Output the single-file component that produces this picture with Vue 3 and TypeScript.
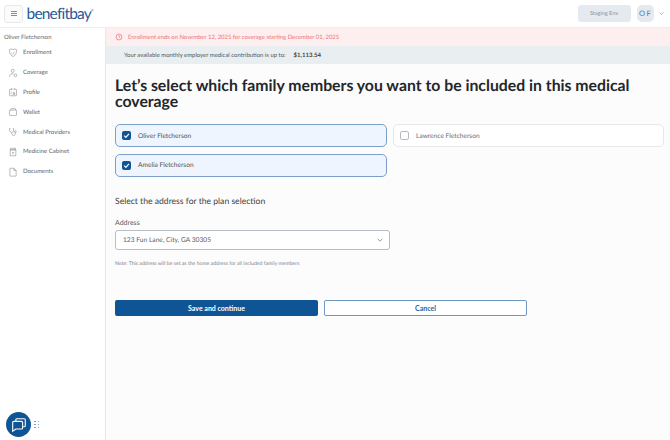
<template>
  <div class="page">
    <header class="topbar">
      <button class="menu-btn" aria-label="Menu">
        <span></span><span></span><span></span>
      </button>
      <div class="logo">benefitbay<sup>®</sup></div>
      <div class="spacer"></div>
      <div class="env">Staging Env</div>
      <div class="avatar">OF</div>
      <svg class="caret" viewBox="0 0 10 10"><path d="M2 3.500l3 3 3-3" /></svg>
    </header>

    <div class="body">
      <aside class="sidebar">
        <div class="user">Oliver Fletcherson</div>
        <nav class="nav">
          <a v-for="item in navItems" :key="item.label" class="nav-item">
            <svg class="nav-icon" viewBox="0 0 16 16">
              <path v-for="d in item.paths" :key="d" :d="d" />
            </svg>
            <span>{{ item.label }}</span>
          </a>
        </nav>
        <div class="chat-row">
          <div class="chat">
            <svg viewBox="0 0 20 20">
              <path d="M6.500 5.500V4.200c0-.7.500-1.200 1.200-1.200h8.100c.7 0 1.200.5 1.200 1.200v6.600c0 .7-.5 1.200-1.200 1.200h-1.300" />
              <path d="M4.200 6h8.600c.7 0 1.200.5 1.200 1.200v6.100c0 .7-.5 1.200-1.200 1.200H6.500L3 17V7.200C3 6.500 3.500 6 4.200 6z" />
            </svg>
          </div>
          <div class="grip"><i v-for="n in 6" :key="n"></i></div>
        </div>
      </aside>

      <main class="main">
        <div class="alert">
          <svg class="alert-icon" viewBox="0 0 12 12">
            <circle cx="6" cy="6" r="4.400" />
            <path d="M6 3.400V6l1.800 1" />
          </svg>
          <span>Enrollment ends on November 12, 2025 for coverage starting December 01, 2025</span>
        </div>
        <div class="contribution">
          <span>Your available monthly employer medical contribution is up to:</span>
          <strong>$1,113.54</strong>
        </div>

        <section class="content">
          <h1>Let’s select which family members you want to be included in this medical coverage</h1>

          <div class="members">
            <label v-for="m in members" :key="m.name" class="member" :class="{ checked: m.checked }">
              <span class="box">
                <svg v-if="m.checked" viewBox="0 0 10 10"><path d="M2.400 5.200l1.900 1.900 3.400-4" /></svg>
              </span>
              <span>{{ m.name }}</span>
            </label>
          </div>

          <h2>Select the address for the plan selection</h2>

          <div class="field-label">Address</div>
          <div class="select">
            <span>123 Fun Lane, City, GA 30305</span>
            <svg viewBox="0 0 10 10"><path d="M2 3.500l3 3 3-3" /></svg>
          </div>
          <p class="note">Note: This address will be set as the home address for all included family members</p>

          <div class="actions">
            <button class="btn primary">Save and continue</button>
            <button class="btn outline">Cancel</button>
          </div>
        </section>
      </main>
    </div>
  </div>
</template>

<script setup lang="ts">
interface NavItem {
  label: string
  paths: string[]
}

const navItems: NavItem[] = [
  {
    label: 'Enrollment',
    paths: [
      'M8 2.500c2-1 4-1 5.500-.2.600 5-1 9-5.500 11.500C3.500 11.300 1.900 7.300 2.500 2.300 4 1.500 6 1.500 8 2.500z',
      'M5.500 7.800l1.800 1.700 3.200-3'
    ]
  },
  {
    label: 'Coverage',
    paths: [
      'M7.500 2a2.500 2.500 0 1 1 0 5 2.500 2.500 0 0 1 0-5z',
      'M2.500 14c0-3 2-5 4.500-5 .8 0 1.500.2 2 .5',
      'M12 9.500a2.200 2.200 0 1 1 0 4.400 2.200 2.200 0 0 1 0-4.400z'
    ]
  },
  {
    label: 'Profile',
    paths: [
      'M5.500 3.500H3.300c-.5 0-.8.300-.8.800v8.900c0 .5.300.8.800.8h9.400c.5 0 .8-.3.800-.8V4.300c0-.5-.3-.8-.8-.8h-2.200',
      'M5.500 2v3M10.500 2v3M7 3.500h2',
      'M9.500 8.500a1.300 1.300 0 1 1 0 2.600 1.300 1.300 0 0 1 0-2.600zM7.500 13c0-1 1-1.800 2-1.800s2 .8 2 1.800M4.500 8h1.500M4.500 10.500h1.500'
    ]
  },
  {
    label: 'Wallet',
    paths: [
      'M3.200 5h9.600c.5 0 .9.400.9.900v6.700c0 .5-.4.900-.9.900H3.200c-.5 0-.9-.4-.9-.9V5.900c0-.5.4-.9.900-.9z',
      'M4 5l1-2.500h6.500L12.500 5'
    ]
  },
  {
    label: 'Medical Providers',
    paths: [
      'M3.800 2.200H2.500C2.200 5.500 3 8.800 5.800 8.800S9.400 5.500 9 2.200H7.700',
      'M5.800 8.800c0 3 1.300 4.800 3.200 4.800 1.800 0 2.700-1.400 2.700-3.200V9',
      'M11.700 6a1.500 1.500 0 1 1 0 3 1.500 1.500 0 0 1 0-3z'
    ]
  },
  {
    label: 'Medicine Cabinet',
    paths: [
      'M4 2h8v2.500H4z',
      'M3.500 4.500h9v9.500h-9z',
      'M8 7.800v3M6.500 9.300h3'
    ]
  },
  {
    label: 'Documents',
    paths: [
      'M3.500 2h6l3.500 3.500v8.600c0 .3-.2.500-.5.500h-9c-.3 0-.5-.2-.5-.5V2.500c0-.3.200-.5.500-.5z',
      'M9.500 2v3.500H13'
    ]
  }
]

const members = [
  { name: 'Oliver Fletcherson', checked: true },
  { name: 'Lawrence Fletcherson', checked: false },
  { name: 'Amelia Fletcherson', checked: true }
]
</script>

<style>
html,
body {
  margin: 0;
  background: #fff;
}
</style>

<style scoped>
.page {
  width: 670px;
  height: 440px;
  display: flex;
  flex-direction: column;
  overflow: hidden;
  font-family: Lato, "Open Sans", sans-serif;
  color: #3c4248;
  text-rendering: geometricPrecision;
}

.topbar {
  height: 28px;
  flex-shrink: 0;
  display: flex;
  align-items: center;
  padding: 0 5px 0 4px;
  box-sizing: border-box;
  border-bottom: 1px solid #eceef0;
  background: #fff;
}

.menu-btn {
  width: 19px;
  height: 18px;
  padding: 0;
  display: flex;
  flex-direction: column;
  align-items: center;
  justify-content: center;
  gap: 1px;
  background: #fbfbfb;
  border: 1px solid #e8e9eb;
  border-radius: 3px;
}

.menu-btn span {
  width: 6px;
  height: 1px;
  background: #8a8d91;
}

.logo {
  margin-left: 3.500px;
  font-size: 15.500px;
  line-height: 20px;
  color: #1f5a99;
  letter-spacing: -0.800px;
}

.logo sup {
  font-size: 3px;
  vertical-align: 8px;
  line-height: 0;
  letter-spacing: 0;
}

.spacer {
  flex: 1;
}

.env {
  width: 53px;
  height: 17px;
  display: flex;
  align-items: center;
  justify-content: center;
  font-size: 5.500px;
  color: #8a9097;
  background: #e5eaf1;
  border-radius: 3px;
}

.avatar {
  width: 17px;
  height: 17px;
  margin-left: 6.500px;
  display: flex;
  align-items: center;
  justify-content: center;
  font-size: 7.500px;
  letter-spacing: 1.500px;
  color: #4f75a8;
  background: #e5eaf1;
  border-radius: 5px;
}

.caret {
  width: 7px;
  height: 7px;
  margin-left: 4px;
  fill: none;
  stroke: #9aa0a6;
  stroke-width: 1;
}

.body {
  flex: 1;
  display: flex;
  min-height: 0;
}

.sidebar {
  width: 106px;
  flex-shrink: 0;
  box-sizing: border-box;
  display: flex;
  flex-direction: column;
  padding: 6px 0 0 4px;
  background: #fff;
  border-right: 1px solid #e6e7e9;
}

.user {
  font-size: 5.900px;
  line-height: 8px;
  color: #5f656b;
}

.nav {
  display: flex;
  flex-direction: column;
  gap: 8px;
  margin-top: 5px;
}

.nav-item {
  height: 11.800px;
  display: flex;
  align-items: center;
  gap: 5px;
  padding-left: 4px;
  font-size: 6px;
  color: #5f656b;
}

.nav-icon {
  width: 10px;
  height: 10px;
  fill: none;
  stroke: #83888d;
  stroke-width: 0.900;
}

.chat-row {
  margin-top: auto;
  display: flex;
  align-items: center;
  gap: 3px;
  padding: 0 0 3px 2px;
}

.chat {
  width: 25px;
  height: 25px;
  display: flex;
  align-items: center;
  justify-content: center;
  background: #0f5596;
  border-radius: 50%;
}

.chat svg {
  width: 18px;
  height: 18px;
  fill: #0f5596;
  stroke: #fff;
  stroke-width: 1.200;
}

.grip {
  display: grid;
  grid-template-columns: 1.500px 1.500px;
  column-gap: 2px;
  row-gap: 1.500px;
}

.grip i {
  width: 1.500px;
  height: 1.500px;
  background: #7f9fc4;
}

.main {
  flex: 1;
  min-width: 0;
  background: #fcfcfc;
}

.alert {
  height: 18px;
  display: flex;
  align-items: center;
  gap: 5px;
  padding-left: 9px;
  font-size: 5.900px;
  color: #ec7379;
  background: #fdefef;
}

.alert-icon {
  width: 8px;
  height: 8px;
  fill: none;
  stroke: #e9686f;
  stroke-width: 1;
}

.contribution {
  height: 18px;
  display: flex;
  align-items: center;
  gap: 8px;
  padding-left: 18px;
  font-size: 5.950px;
  color: #51575d;
  background: #e9eef1;
}

.contribution strong {
  font-size: 6.050px;
  font-weight: 700;
  color: #3a4046;
}

.content {
  padding: 14px 6px 0 9px;
}

h1 {
  margin: 0;
  font-size: 15.800px;
  line-height: 16px;
  font-weight: 700;
  color: #23272b;
}

.members {
  display: grid;
  grid-template-columns: 272px 271px;
  gap: 6.500px 6px;
  margin-top: 14px;
}

.member {
  height: 23px;
  box-sizing: border-box;
  display: flex;
  align-items: center;
  gap: 7px;
  padding-left: 6px;
  font-size: 6.620px;
  color: #656b71;
  background: #fff;
  border: 1px solid #e6e7ea;
  border-radius: 5px;
}

.member.checked {
  color: #4c5258;
  background: #eef5fe;
  border-color: #7b9fc9;
}

.box {
  width: 9px;
  height: 9px;
  flex-shrink: 0;
  box-sizing: border-box;
  display: flex;
  border: 1px solid #b5bbc2;
  border-radius: 2px;
  background: #fff;
}

.member.checked .box {
  border: 0;
  background: #0f5596;
}

.box svg {
  width: 100%;
  height: 100%;
  fill: none;
  stroke: #fff;
  stroke-width: 1.300;
}

h2 {
  margin: 18.500px 0 0;
  font-size: 8.600px;
  line-height: 12px;
  font-weight: 400;
  color: #3a3f45;
}

.field-label {
  margin-top: 10.500px;
  font-size: 7px;
  line-height: 10px;
  color: #565c63;
}

.select {
  width: 275px;
  height: 20px;
  margin-top: 2.500px;
  box-sizing: border-box;
  display: flex;
  align-items: center;
  justify-content: space-between;
  padding: 0 5px 0 7px;
  font-size: 6.670px;
  color: #565c63;
  background: #fff;
  border: 1px solid #b8bec6;
  border-radius: 3px;
}

.select svg {
  width: 8px;
  height: 8px;
  fill: none;
  stroke: #7f858c;
  stroke-width: 1;
}

.note {
  margin: 11px 0 0;
  font-size: 5.150px;
  line-height: 7px;
  color: #7c8187;
}

.actions {
  display: flex;
  gap: 6px;
  margin-top: 31.500px;
}

.btn {
  width: 203px;
  height: 16px;
  padding: 0;
  box-sizing: border-box;
  font-family: inherit;
  font-size: 7px;
  font-weight: 700;
  border-radius: 2px;
}

.primary {
  color: #fff;
  background: #0f5596;
  border: 0;
}

.outline {
  color: #2a639f;
  background: #fff;
  border: 1px solid #6f97c4;
}
</style>
